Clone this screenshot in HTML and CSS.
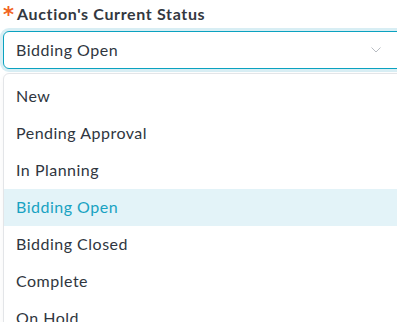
FILE: index.html
```html
<!DOCTYPE html>
<html>
<head>
<meta charset="utf-8">
<link rel="stylesheet" href="styles.css">
</head>
<body>
<div class="field">
  <label class="label"><span class="req">*</span>Auction's Current Status</label>
  <div class="select">
    <span class="value">Bidding Open</span>
    <svg class="chev" width="10" height="6" viewBox="0 0 10 6"><path d="M0.5 0.5 L5 5 L9.5 0.5" fill="none" stroke="#b8bcc2" stroke-width="1"/></svg>
  </div>
  <ul class="menu">
    <li class="opt">New</li>
    <li class="opt">Pending Approval</li>
    <li class="opt">In Planning</li>
    <li class="opt active">Bidding Open</li>
    <li class="opt">Bidding Closed</li>
    <li class="opt">Complete</li>
    <li class="opt">On Hold</li>
  </ul>
</div>
</body>
</html>
```
FILE: styles.css
```css
html, body {
  margin: 0;
  padding: 0;
  background: #fff;
  overflow: hidden;
}
body {
  font-family: Lato, "Open Sans", sans-serif;
  color: #2f3640;
  letter-spacing: 0.5px;
}
.field {
  padding: 4px 0 0 3px;
  width: 420px;
}
.label {
  display: flex;
  align-items: center;
  font-weight: 700;
  font-size: 16px;
  line-height: 20px;
  color: #333840;
  height: 20px;
  letter-spacing: 0.65px;
}
.req {
  align-self: flex-start;
  font-family: "DejaVu Sans", sans-serif;
  color: #f26322;
  font-size: 21px;
  line-height: 20px;
  font-weight: 700;
  width: 14px;
  margin-top: 1px;
  letter-spacing: 0;
}
.select {
  margin-top: 7px;
  border: 1px solid #0aa2c0;
  border-radius: 6px;
  box-shadow: 0 0 0 3px #d8eef4;
  display: flex;
  align-items: center;
  padding: 0 0 1px 12px;
  box-sizing: border-box;
  height: 38px;
  font-size: 16px;
}
.value { flex: 1; }
.chev {
  margin-right: 41px;
}
.menu {
  list-style: none;
  margin: 4px 0 0 0;
  padding: 4px 0;
  border: 1px solid #e3e5e8;
  border-radius: 6px;
  box-shadow: 0 2px 6px rgba(0,0,0,0.04);
}
.opt {
  height: 36px;
  line-height: 36px;
  padding: 0 0 1px 12px;
  font-size: 16px;
}
.opt.active {
  background: #e3f3f8;
  color: #18a2c2;
}
```
